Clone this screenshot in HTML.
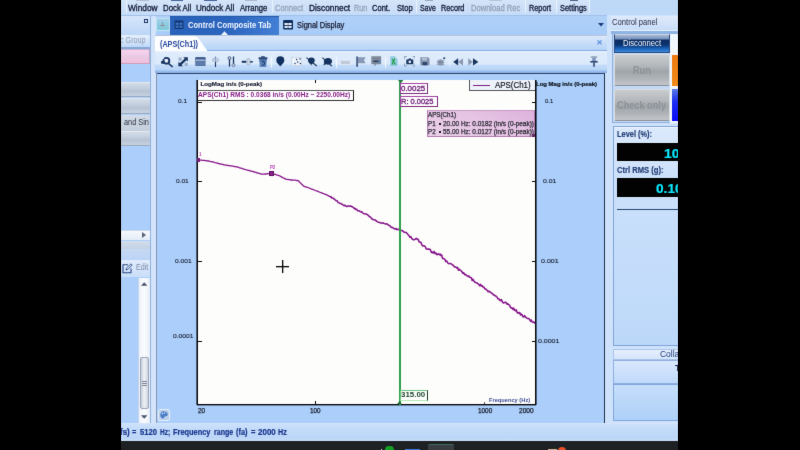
<!DOCTYPE html>
<html>
<head>
<meta charset="utf-8">
<style>
*{margin:0;padding:0;box-sizing:border-box;}
html,body{width:800px;height:450px;overflow:hidden;background:#000;}
body{position:relative;font-family:"Liberation Sans",sans-serif;font-size:9px;color:#1b2646;}
.a{position:absolute;display:block;}
.t{position:absolute;white-space:nowrap;transform-origin:0 0;}
#app{left:0;top:0;width:800px;height:450px;background:#b3d3f9;overflow:hidden;filter:url(#bl);}
</style>
</head>
<body>
<svg width="0" height="0" style="position:absolute"><filter id="bl" x="0" y="0" width="100%" height="100%" color-interpolation-filters="sRGB"><feConvolveMatrix order="3" kernelMatrix="0.0064 0.0672 0.0064 0.0672 0.7056 0.0672 0.0064 0.0672 0.0064" divisor="1" edgeMode="duplicate" preserveAlpha="true"/></filter></svg>
<div id="app" class="a">
<div class="a" style="left:0px;top:0px;width:800px;height:15px;background:linear-gradient(#d4e4f9,#c6dcf7);"></div>
<div class="a" style="left:590px;top:0px;width:100px;height:15px;background:#bed9f8;"></div>
<span class="t" style="left:128px;top:4.4px;font-size:9px;line-height:9px;color:#0e1430;transform:scaleX(0.922);-webkit-text-stroke:.3px #0e1430;">Window</span>
<span class="t" style="left:163.3px;top:4.4px;font-size:9px;line-height:9px;color:#0e1430;transform:scaleX(0.867);-webkit-text-stroke:.3px #0e1430;">Dock All</span>
<span class="t" style="left:196.2px;top:4.4px;font-size:9px;line-height:9px;color:#0e1430;transform:scaleX(0.898);-webkit-text-stroke:.3px #0e1430;">Undock All</span>
<span class="t" style="left:239.5px;top:4.4px;font-size:9px;line-height:9px;color:#0e1430;transform:scaleX(0.853);-webkit-text-stroke:.3px #0e1430;">Arrange</span>
<span class="t" style="left:274.5px;top:4.4px;font-size:9px;line-height:9px;color:#93a0b6;transform:scaleX(0.835);-webkit-text-stroke:.3px #93a0b6;">Connect</span>
<span class="t" style="left:308.7px;top:4.4px;font-size:9px;line-height:9px;color:#0e1430;transform:scaleX(0.925);-webkit-text-stroke:.3px #0e1430;">Disconnect</span>
<span class="t" style="left:354.2px;top:4.4px;font-size:9px;line-height:9px;color:#93a0b6;transform:scaleX(0.799);-webkit-text-stroke:.3px #93a0b6;">Run</span>
<span class="t" style="left:372.1px;top:4.4px;font-size:9px;line-height:9px;color:#0e1430;transform:scaleX(0.837);-webkit-text-stroke:.3px #0e1430;">Cont.</span>
<span class="t" style="left:396.6px;top:4.4px;font-size:9px;line-height:9px;color:#0e1430;transform:scaleX(0.843);-webkit-text-stroke:.3px #0e1430;">Stop</span>
<span class="t" style="left:420.4px;top:4.4px;font-size:9px;line-height:9px;color:#0e1430;transform:scaleX(0.770);-webkit-text-stroke:.3px #0e1430;">Save</span>
<span class="t" style="left:441.2px;top:4.4px;font-size:9px;line-height:9px;color:#0e1430;transform:scaleX(0.807);-webkit-text-stroke:.3px #0e1430;">Record</span>
<span class="t" style="left:470.9px;top:4.4px;font-size:9px;line-height:9px;color:#93a0b6;transform:scaleX(0.841);-webkit-text-stroke:.3px #93a0b6;">Download Rec</span>
<span class="t" style="left:529px;top:4.4px;font-size:9px;line-height:9px;color:#0e1430;transform:scaleX(0.814);-webkit-text-stroke:.3px #0e1430;">Report</span>
<span class="t" style="left:559.7px;top:4.4px;font-size:9px;line-height:9px;color:#0e1430;transform:scaleX(0.824);-webkit-text-stroke:.3px #0e1430;">Settings</span>
<div class="a" style="left:125.5px;top:0px;width:1px;height:13px;background:#e9f2fd;"></div>
<div class="a" style="left:272px;top:0px;width:1px;height:13px;background:#e9f2fd;"></div>
<div class="a" style="left:416px;top:0px;width:1px;height:13px;background:#e9f2fd;"></div>
<div class="a" style="left:525px;top:0px;width:1px;height:13px;background:#e9f2fd;"></div>
<div class="a" style="left:556px;top:0px;width:1px;height:13px;background:#e9f2fd;"></div>
<div class="a" style="left:589px;top:0px;width:1px;height:13px;background:#e9f2fd;"></div>
<div class="a" style="left:136px;top:0px;width:13px;height:1.3px;background:#a9b6cc;opacity:.85;"></div>
<div class="a" style="left:171px;top:0px;width:12px;height:1.3px;background:#2d4d8c;opacity:.85;"></div>
<div class="a" style="left:204px;top:0px;width:13px;height:1.3px;background:#2d4d8c;opacity:.85;"></div>
<div class="a" style="left:245px;top:0px;width:12px;height:1.3px;background:#a3b0c6;opacity:.85;"></div>
<div class="a" style="left:425px;top:0px;width:8px;height:1.3px;background:#8f9db6;opacity:.85;"></div>
<div class="a" style="left:489px;top:0px;width:13px;height:1.3px;background:#b4c0d2;opacity:.85;"></div>
<div class="a" style="left:570px;top:0px;width:8px;height:1.3px;background:#3a4f78;opacity:.85;"></div>
<div class="a" style="left:121px;top:15px;width:486px;height:20px;background:linear-gradient(#b0d1f9,#a8ccf8);"></div>
<div class="a" style="left:121px;top:15px;width:557px;height:1px;background:#9fc0ea;"></div>
<div class="a" style="left:121px;top:16px;width:30px;height:19px;background:linear-gradient(#d6e5fa,#bcd6f7);"></div>
<div class="a" style="left:143.6px;top:18.9px;width:4.2px;height:4.2px;background:#17335f;"></div>
<div class="a" style="left:144.6px;top:19.9px;width:2.2px;height:2.2px;background:#dbe8fb;"></div>
<div class="a" style="left:150px;top:16px;width:1px;height:19px;background:#8fb2e0;"></div>
<div class="a" style="left:150.6px;top:16px;width:5.8px;height:420px;background:#d3e4fb;"></div>
<div class="a" style="left:155.6px;top:17.6px;width:14px;height:13.6px;background:linear-gradient(#a2cfec,#8ccbe2 50%,#80c8da);border:1px solid #c4e3f3;"></div>
<div class="a" style="left:160.2px;top:24.6px;width:5px;height:1.4px;background:#8f9098;"></div>
<div class="a" style="left:162px;top:22px;width:1.4px;height:3.4px;background:#8f9098;"></div>
<div class="a" style="left:162.2px;top:26px;width:1px;height:1.4px;background:#a0a4ac;"></div>
<div class="a" style="left:170px;top:16px;width:109px;height:19px;background:linear-gradient(100deg,#2a62ba 0%,#2b65be 55%,#4480d6 100%);"></div>
<div class="a" style="left:170px;top:16px;width:109px;height:1px;background:#2458a8;"></div>
<svg class="a" style="left:221.2px;top:31px" width="7" height="4"><path d="M0 4 L3.5 0.3 L7 4Z" fill="#eef4fd"/></svg>
<svg class="a" style="left:174px;top:20px" width="10" height="10"><rect x="0.5" y="0.5" width="9" height="8.5" rx="1" fill="#12366f"/><rect x="1.6" y="2.6" width="3" height="2.2" fill="#3d74c8"/><rect x="5.4" y="2.6" width="3" height="2.2" fill="#3d74c8"/><rect x="1.6" y="5.6" width="3" height="2.2" fill="#3d74c8"/><rect x="5.4" y="5.6" width="3" height="2.2" fill="#3d74c8"/></svg>
<span class="t" style="left:187.6px;top:21px;font-size:9px;line-height:9px;color:#f2f6fd;font-weight:bold;transform:scaleX(0.842);">Control Composite Tab</span>
<svg class="a" style="left:283px;top:20px" width="10.4" height="9.8"><rect x="0.1" y="0.1" width="10" height="9.4" rx="1.2" fill="#0e2c5e"/><rect x="1.5" y="3" width="3.3" height="2" fill="#f0f5fd"/><rect x="5.3" y="3" width="3.3" height="2" fill="#f0f5fd"/><rect x="1.5" y="5.9" width="3.3" height="2" fill="#f0f5fd"/><rect x="5.3" y="5.9" width="3.3" height="2" fill="#f0f5fd"/></svg>
<span class="t" style="left:296.6px;top:21px;font-size:9px;line-height:9px;color:#14162a;transform:scaleX(0.829);-webkit-text-stroke:.25px #14162a;">Signal Display</span>
<svg class="a" style="left:597.5px;top:23px" width="6" height="4"><path d="M0 0 L6 0 L3 3.6Z" fill="#1b3a78"/></svg>
<div class="a" style="left:606.6px;top:15px;width:4.4px;height:58px;background:#cfe2fb;"></div>
<div class="a" style="left:605px;top:73px;width:8px;height:368px;background:#cfe2fb;"></div>
<div class="a" style="left:155px;top:35px;width:452px;height:16px;background:linear-gradient(#e8effb 0%,#d8e6fa 14%,#b3d2f8 100%);"></div>
<div class="a" style="left:155px;top:34.6px;width:452px;height:0.8px;background:#b4c3da;"></div>
<div class="a" style="left:155px;top:50.2px;width:452px;height:1px;background:#86ade2;"></div>
<svg class="a" style="left:155px;top:36px" width="56" height="15"><path d="M0 15 L0 2 Q0 0 2 0 L39 0 Q42 0 44 3 L52.5 15Z" fill="#fdfeff"/></svg>
<span class="t" style="left:159.6px;top:39.5px;font-size:8.5px;line-height:8.5px;color:#24459a;font-weight:bold;transform:scaleX(0.847);">(APS(Ch1))</span>
<svg class="a" style="left:597.2px;top:40px" width="5" height="4.6"><path d="M0.4 0.4 L4.6 4.2 M4.6 0.4 L0.4 4.2" stroke="#5a90e0" stroke-width="1.2"/></svg>
<div class="a" style="left:155px;top:51.2px;width:452px;height:21.8px;background:linear-gradient(#e9f2fd 0%,#deebfc 10%,#dbeafb 58%,#c1daf8 66%,#b9d5f7 84%,#96bbee 93%,#88b0e8 100%);"></div>
<svg class="a" style="left:161px;top:56px" width="13" height="12" viewBox="0 0 13 12"><circle cx="5.4" cy="4.8" r="2.9" fill="#e6effb" stroke="#17335f" stroke-width="1.9"/><rect x="0.1" y="5" width="3.2" height="2.7" fill="#17335f"/><path d="M2.2 2.2 L3.6 3.6" stroke="#dfe9f9" stroke-width=".9"/><path d="M7.7 7.6 L11.3 10.6" stroke="#17335f" stroke-width="1.4" stroke-linecap="round"/></svg>
<svg class="a" style="left:177.5px;top:57px" width="10.5" height="9.5" viewBox="0 0 10.5 9.5"><rect x="0.5" y="0.5" width="3.2" height="3.2" fill="#8fa3c4" opacity=".8"/><rect x="6.6" y="5.8" width="3.2" height="3.2" fill="#8fa3c4" opacity=".8"/><path d="M2 7.6 L8.2 1.8" stroke="#17335f" stroke-width="2.3"/><path d="M5.2 0.2 L9.8 0.2 L9.8 4.6Z" fill="#17335f"/><path d="M0.4 4.8 L0.4 9.2 L5 9.2Z" fill="#17335f"/></svg>
<svg class="a" style="left:195px;top:56.6px" width="11" height="9.6" viewBox="0 0 11 9.6"><rect x="0.3" y="0.3" width="10.2" height="8.9" rx="1.2" fill="#4d6b9a"/><rect x="0.3" y="0.3" width="10.2" height="2.3" rx="1" fill="#3b5988"/><rect x="1" y="2.5" width="8.8" height="1.3" fill="#b5c8e4"/><rect x="1.2" y="4.4" width="8.4" height="4" fill="#5f7eae"/></svg>
<svg class="a" style="left:212px;top:56px" width="7" height="12" viewBox="0 0 7 12"><path d="M3.5 0.5 L3.5 2.6" stroke="#5a7098" stroke-width=".9"/><path d="M3.5 5.6 L3.5 11" stroke="#17335f" stroke-width="1.1"/><rect x="0.6" y="2.4" width="5.8" height="3.2" rx="0.8" fill="#c3d1e4" stroke="#93a6c2" stroke-width=".6"/><path d="M3.5 2.6 L3.5 5.4" stroke="#7d90b0" stroke-width=".8"/></svg>
<svg class="a" style="left:227px;top:56px" width="9" height="12" viewBox="0 0 9 12"><path d="M2.5 3 L2.5 10.6" stroke="#17335f" stroke-width="1.3"/><path d="M6.5 0.5 L6.5 8" stroke="#17335f" stroke-width="1.3"/><circle cx="2.5" cy="2.1" r="1.4" fill="#dfe9f8" stroke="#17335f" stroke-width=".8"/><circle cx="6.5" cy="9.2" r="1.5" fill="#c3cfdf" stroke="#5a6f94" stroke-width=".8"/></svg>
<svg class="a" style="left:241px;top:58px" width="12" height="8" viewBox="0 0 12 8"><path d="M0.8 3.8 L5.4 3.8" stroke="#17335f" stroke-width="2"/><path d="M9 3.8 L11.8 3.8" stroke="#17335f" stroke-width="1.5"/><rect x="6" y="0.6" width="2.9" height="6.2" rx="0.9" fill="#cdd8e8" stroke="#93a4be" stroke-width=".6"/></svg>
<svg class="a" style="left:257.5px;top:56px" width="10" height="11.4" viewBox="0 0 10 11.4"><rect x="0.6" y="1.3" width="8.8" height="1.7" fill="#23406e"/><rect x="3.2" y="0.2" width="3.6" height="1.4" fill="#23406e"/><path d="M1.2 3.2 L8.8 3.2 L8.2 10.9 L1.8 10.9Z" fill="#5c82ba"/><path d="M1.2 3.2 L8.8 3.2 L8.7 4.4 L1.3 4.4Z" fill="#3d5f94"/><path d="M3.8 6 A1.7 1.7 0 1 1 4.2 8.8" stroke="#1d3c6c" stroke-width="1.1" fill="none"/></svg>
<div class="a" style="left:271.4px;top:57px;width:1px;height:11px;background:#f4f8fe"></div>
<svg class="a" style="left:275.8px;top:56px" width="9" height="11" viewBox="0 0 9 11"><path d="M4.3 10.6 C3.9 9.2 0.3 7.6 0.3 4.3 A4 4 0 0 1 8.3 4.3 C8.3 7.6 4.7 9.2 4.3 10.6Z" fill="#0f2f5f"/></svg>
<svg class="a" style="left:290.5px;top:57px" width="11" height="9.5" viewBox="0 0 11 9.5"><path d="M1.2 0.3 L1.2 8.2 L10.6 8.2" stroke="#cfd9e8" stroke-width="1.1" fill="none"/><rect x="0.6" y="0.4" width="10" height="8.2" fill="#f1f6fd" fill-opacity=".9" stroke="#c3cfe0" stroke-width=".7"/><circle cx="5.6" cy="2.6" r=".75" fill="#17335f"/><circle cx="9" cy="2.1" r=".75" fill="#17335f"/><circle cx="6.6" cy="5" r=".75" fill="#17335f"/><circle cx="4" cy="6.4" r=".75" fill="#17335f"/><circle cx="9.4" cy="6.4" r=".75" fill="#17335f"/></svg>
<svg class="a" style="left:306px;top:57px" width="11.5" height="10" viewBox="0 0 11.5 10"><path d="M5.2 8.4 C4.8 7 2 6 2 3.6 A3.3 3 0 0 1 8.8 3.6 C8.8 6 5.8 6.8 5.2 8.4Z" fill="#17335f"/><path d="M0.4 0.6 L10.8 9" stroke="#17335f" stroke-width="1.1"/></svg>
<svg class="a" style="left:322.3px;top:57px" width="10.5" height="10" viewBox="0 0 10.5 10"><path d="M1.4 8.6 L2.2 5.6 A4.1 3.3 0 1 1 4 7.2Z" fill="#17335f"/><path d="M0.3 0.6 L9.8 9" stroke="#17335f" stroke-width="1.1"/></svg>
<div class="a" style="left:336px;top:57px;width:1px;height:11px;background:#f4f8fe"></div>
<svg class="a" style="left:340px;top:59.7px" width="11" height="5" viewBox="0 0 11 5"><rect x="0.3" y="0.3" width="10" height="4.2" fill="#bfc9d8" stroke="#e4eaf3" stroke-width=".8"/></svg>
<svg class="a" style="left:355.5px;top:56px" width="10.5" height="11.5" viewBox="0 0 10.5 11.5"><rect x="0.4" y="0.5" width="1.4" height="10.2" fill="#17335f"/><path d="M1.8 1.3 L9.6 1.3 L8 4.2 L9.6 7.2 L1.8 7.2Z" fill="#8799b6"/></svg>
<svg class="a" style="left:371px;top:56.3px" width="11" height="10.8" viewBox="0 0 11 10.8"><path d="M0.3 0.3 L10.1 0.3 L10.1 8.2 L5.4 8.2 L3.6 10.4 L3.6 8.2 L0.3 8.2Z" fill="#7d8797"/><path d="M2.4 5.3 L7.6 5.3" stroke="#1c3560" stroke-width="1.3"/><path d="M6 7 L9.6 7 L9.6 3.6Z" fill="#5b86c8" opacity=".7"/></svg>
<div class="a" style="left:385.4px;top:57px;width:1px;height:11px;background:#f4f8fe"></div>
<svg class="a" style="left:389.8px;top:56.3px" width="8" height="10.4" viewBox="0 0 8 10.4"><path d="M0.3 0.3 L5.2 0.3 L7.6 2.7 L7.6 10.1 L0.3 10.1Z" fill="#92c9e0"/><path d="M5.2 0.3 L5.2 2.7 L7.6 2.7Z" fill="#d3ecf5"/><path d="M2 3 L5.4 8.6 M5 2.2 L2 8.4" stroke="#1fa040" stroke-width="1.2"/></svg>
<svg class="a" style="left:403.6px;top:56.3px" width="11.6" height="10.4" viewBox="0 0 11.6 10.4"><path d="M0.5 2.8 L0.5 0.5 L2.8 0.5 M8.8 0.5 L11.1 0.5 L11.1 2.8 M11.1 7.6 L11.1 9.9 L8.8 9.9 M2.8 9.9 L0.5 9.9 L0.5 7.6" stroke="#8799b6" stroke-width="1" fill="none"/><path d="M2.3 3.4 L4.2 3.4 L4.8 2.4 L6.8 2.4 L7.4 3.4 L9.3 3.4 L9.3 8.3 L2.3 8.3Z" fill="#17335f"/><circle cx="5.8" cy="5.8" r="1.35" fill="#e8effb"/></svg>
<svg class="a" style="left:419.8px;top:57.2px" width="9.8" height="8.6" viewBox="0 0 9.8 8.6"><path d="M0.3 0.3 L8 0.3 L9.5 1.8 L9.5 8.3 L0.3 8.3Z" fill="#7f8fac"/><rect x="1.9" y="0.7" width="5.2" height="2.7" fill="#b4bfd2"/><rect x="2.6" y="5.2" width="4.6" height="3.1" fill="#2c426c"/></svg>
<svg class="a" style="left:435.8px;top:57px" width="10" height="9" viewBox="0 0 10 9"><path d="M0.3 4 L4.6 2.2 L8.9 4 L4.6 5.8Z" fill="#8a96ac"/><path d="M0.3 5.8 L4.6 4 L8.9 5.8 L4.6 7.6Z" fill="#7a88a2"/><path d="M0.3 7.4 L4.6 5.6 L8.9 7.4 L4.6 8.8Z" fill="#8a96ac"/><circle cx="8.2" cy="1.3" r="1" fill="#17335f"/></svg>
<div class="a" style="left:449.2px;top:58px;width:1px;height:9px;background:#f4f8fe;opacity:.45"></div>
<svg class="a" style="left:453px;top:58px" width="10.5" height="8" viewBox="0 0 10.5 8"><path d="M5.2 0.2 L5.2 7.6 L0.2 3.9Z" fill="#17335f"/><path d="M10 0.2 L10 7.6 L5.2 3.9Z" fill="#8a98b2"/></svg>
<svg class="a" style="left:468px;top:58px" width="11" height="8" viewBox="0 0 11 8"><path d="M0.2 0.2 L0.2 7.6 L5 3.9Z" fill="#8a98b2"/><path d="M5 0.2 L5 7.6 L10.4 3.9Z" fill="#17335f"/></svg>
<svg class="a" style="left:590.2px;top:56.3px" width="8" height="11" viewBox="0 0 8 11"><path d="M0.8 1 L7.2 1" stroke="#8292ac" stroke-width="1.3"/><rect x="2.2" y="1.6" width="3.6" height="3.7" fill="#7f94b8"/><path d="M0.3 5.8 L7.7 5.8" stroke="#233f70" stroke-width="1.5"/><path d="M4 6.4 L4 10.8" stroke="#17335f" stroke-width="1.4"/></svg>
<div class="a" style="left:156.4px;top:73px;width:448.6px;height:351px;background:#abcffa;"></div>
<div class="a" style="left:156.4px;top:73px;width:448.6px;height:1px;background:#2f4060;"></div>
<div class="a" style="left:156.4px;top:73px;width:1px;height:351px;background:#8496b2;"></div>
<div class="a" style="left:604px;top:73px;width:1px;height:351px;background:#1f3050;"></div>
<div class="a" style="left:198px;top:80px;width:337px;height:324px;background:#fdfdfb;"></div>
<div class="a" style="left:197px;top:80px;width:1px;height:325px;background:#0a0a0a;"></div>
<div class="a" style="left:196px;top:80px;width:1px;height:325px;background:rgba(10,20,40,.6);"></div>
<div class="a" style="left:197px;top:404px;width:339.4px;height:1px;background:#0a0a0a;"></div>
<div class="a" style="left:197px;top:405px;width:339.4px;height:1px;background:rgba(10,20,40,.4);"></div>
<div class="a" style="left:535px;top:80px;width:1px;height:325px;background:#0a0a0a;"></div>
<div class="a" style="left:536px;top:80px;width:1px;height:325px;background:rgba(10,20,40,.6);"></div>
<div class="a" style="left:198px;top:102.0px;width:3.6px;height:1px;background:#0a0a0a;"></div>
<div class="a" style="left:531.5px;top:102.0px;width:3.6px;height:1px;background:#0a0a0a;"></div>
<div class="a" style="left:198px;top:181.0px;width:3.6px;height:1px;background:#0a0a0a;"></div>
<div class="a" style="left:531.5px;top:181.0px;width:3.6px;height:1px;background:#0a0a0a;"></div>
<div class="a" style="left:198px;top:261.0px;width:3.6px;height:1px;background:#0a0a0a;"></div>
<div class="a" style="left:531.5px;top:261.0px;width:3.6px;height:1px;background:#0a0a0a;"></div>
<div class="a" style="left:198px;top:341.0px;width:3.6px;height:1px;background:#0a0a0a;"></div>
<div class="a" style="left:531.5px;top:341.0px;width:3.6px;height:1px;background:#0a0a0a;"></div>
<div class="a" style="left:314.7px;top:400.8px;width:1.2px;height:3.4px;background:#0a0a0a;"></div>
<div class="a" style="left:484.2px;top:402px;width:1px;height:2px;background:#555;"></div>
<div class="a" style="left:315px;top:80px;width:1.2px;height:3.3px;background:#0a0a0a;"></div>
<span class="t" style="left:178.3px;top:98.9px;font-size:5.8px;line-height:5.8px;color:#1c2238;transform:scaleX(1.116);-webkit-text-stroke:.15px #1c2238;">0.1</span>
<span class="t" style="left:176.15px;top:179.0px;font-size:5.8px;line-height:5.8px;color:#1c2238;transform:scaleX(1.125);-webkit-text-stroke:.15px #1c2238;">0.01</span>
<span class="t" style="left:174.6px;top:258.8px;font-size:5.8px;line-height:5.8px;color:#1c2238;transform:scaleX(1.144);-webkit-text-stroke:.15px #1c2238;">0.001</span>
<span class="t" style="left:172.8px;top:334.3px;font-size:5.8px;line-height:5.8px;color:#1c2238;transform:scaleX(1.150);-webkit-text-stroke:.15px #1c2238;">0.0001</span>
<span class="t" style="left:544.9px;top:99.0px;font-size:5.8px;line-height:5.8px;color:#1c2238;transform:scaleX(1.017);-webkit-text-stroke:.15px #1c2238;">0.1</span>
<span class="t" style="left:542.75px;top:179.0px;font-size:5.8px;line-height:5.8px;color:#1c2238;transform:scaleX(1.178);-webkit-text-stroke:.15px #1c2238;">0.01</span>
<span class="t" style="left:540.55px;top:259.3px;font-size:5.8px;line-height:5.8px;color:#1c2238;transform:scaleX(1.219);-webkit-text-stroke:.15px #1c2238;">0.001</span>
<span class="t" style="left:538.3px;top:339.3px;font-size:5.8px;line-height:5.8px;color:#1c2238;transform:scaleX(1.206);-webkit-text-stroke:.15px #1c2238;">0.0001</span>
<span class="t" style="left:197.9px;top:407.8px;font-size:6.9px;line-height:6.9px;color:#141826;transform:scaleX(0.938);-webkit-text-stroke:.25px #141826;">20</span>
<span class="t" style="left:310.4px;top:407.8px;font-size:6.9px;line-height:6.9px;color:#141826;transform:scaleX(0.921);-webkit-text-stroke:.25px #141826;">100</span>
<span class="t" style="left:477.7px;top:407.8px;font-size:6.9px;line-height:6.9px;color:#141826;transform:scaleX(0.925);-webkit-text-stroke:.25px #141826;">1000</span>
<span class="t" style="left:519.4px;top:407.8px;font-size:6.9px;line-height:6.9px;color:#141826;transform:scaleX(0.951);-webkit-text-stroke:.25px #141826;">2000</span>
<span class="t" style="left:200.5px;top:81px;font-size:6.2px;line-height:6.2px;color:#141a30;font-weight:bold;-webkit-text-stroke:.15px #141a30;">LogMag in/s (0-peak)</span>
<span class="t" style="left:536.3px;top:81px;font-size:6.2px;line-height:6.2px;color:#0c101a;font-weight:bold;transform:scaleX(0.966);-webkit-text-stroke:.2px #0c101a;">Log Mag in/s (0-peak)</span>
<span class="t" style="left:489px;top:396.6px;font-size:6.2px;line-height:6.2px;color:#3a4a98;font-weight:bold;transform:scaleX(0.920);">Frequency (Hz)</span>
<div class="a" style="left:198.2px;top:89.8px;width:155.8px;height:11px;background:#fefefe;border:1px solid #555;border-right-color:#1a1a1a;border-bottom-color:#333;border-left:none;"></div>
<span class="t" style="left:198px;top:92px;font-size:6.4px;line-height:6.4px;color:#861c86;font-weight:bold;transform:scaleX(1.029);">APS(Ch1) RMS : 0.0368 in/s (0.00Hz ~ 2250.00Hz)</span>
<svg class="a" style="left:190px;top:150px" width="350" height="180"><path d="M7.9 9.8 L8.8 9.8 L9.7 9.9 L10.6 10.1 L11.4 10.1 L12.3 10.3 L13.2 10.4 L14.1 10.4 L15.0 10.6 L15.8 10.7 L16.7 10.7 L17.5 11.0 L18.3 11.0 L19.2 11.1 L20.0 11.4 L20.8 11.6 L21.7 11.6 L22.5 11.8 L23.4 12.0 L24.3 12.4 L25.2 12.7 L26.2 12.9 L27.1 13.1 L28.0 13.4 L28.8 13.7 L29.6 13.6 L30.5 14.1 L31.3 14.1 L32.1 14.3 L32.9 14.4 L33.8 14.8 L34.6 14.8 L35.5 15.1 L36.4 15.1 L37.3 15.4 L38.2 15.5 L39.1 15.6 L40.0 15.8 L40.8 15.9 L41.6 15.9 L42.4 16.1 L43.2 16.2 L44.0 16.5 L44.8 16.6 L45.6 16.7 L46.4 16.9 L47.2 17.0 L48.1 17.2 L48.9 17.5 L49.7 17.9 L50.5 18.1 L51.4 18.2 L52.2 18.6 L53.0 18.8 L53.9 19.1 L54.8 19.4 L55.8 19.7 L56.7 19.8 L57.6 20.3 L58.5 20.4 L59.3 20.5 L60.1 20.8 L60.9 21.2 L61.8 21.2 L62.6 21.5 L63.4 21.6 L64.2 22.0 L65.0 22.2 L65.9 22.5 L66.8 22.7 L67.6 23.1 L68.5 23.1 L69.4 23.5 L70.2 23.7 L71.1 24.0 L72.0 24.2 L72.8 24.1 L73.6 24.2 L74.4 24.2 L75.2 24.0 L76.0 24.0 L76.8 23.9 L77.7 23.6 L78.5 23.7 L79.3 23.6 L80.2 23.6 L81.0 23.3 L81.8 23.6 L82.6 23.7 L83.4 23.9 L84.2 24.2 L85.0 24.4 L85.8 24.5 L86.7 24.9 L87.5 25.1 L88.3 25.4 L89.2 25.6 L90.0 26.0 L91.0 26.7 L92.0 27.1 L93.0 27.8 L93.9 28.1 L94.9 28.6 L95.8 29.1 L96.8 29.4 L97.6 29.4 L98.5 29.6 L99.4 29.7 L100.2 29.9 L101.1 30.0 L102.0 30.0 L102.9 30.2 L103.7 30.1 L104.6 30.2 L105.4 30.2 L106.3 30.5 L107.1 30.6 L108.0 30.5 L108.8 31.2 L109.7 32.1 L110.5 33.0 L111.5 34.0 L112.6 35.0 L113.6 36.1 L114.5 36.4 L115.4 36.8 L116.3 37.0 L117.3 37.3 L118.2 37.7 L119.1 38.0 L120.0 38.4 L120.9 38.7 L121.7 39.2 L122.6 39.4 L123.4 39.7 L124.3 40.0 L125.1 40.3 L126.0 40.6 L126.8 40.8 L127.7 41.4 L128.5 41.7 L129.3 42.0 L130.2 42.4 L131.0 42.6 L131.9 42.9 L132.8 43.3 L133.7 43.6 L134.6 44.1 L135.5 44.3 L136.4 44.6 L137.2 45.1 L138.2 45.6 L139.1 46.2 L140.1 46.6 L141.1 46.9 L142.0 48.0" fill="none" stroke="#86148a" stroke-width="1.3" stroke-linejoin="round"/><path d="M140.1 46.6 L141.1 46.9 L142.0 48.0 L142.9 48.0 L143.7 48.7 L144.6 49.2 L145.4 50.0 L146.2 50.8 L147.2 50.8 L148.1 52.5 L149.1 52.9 L150.0 53.4 L150.8 53.4 L151.6 54.0 L152.5 54.6 L153.3 55.1 L154.1 55.7 L155.1 55.3 L156.1 56.3 L157.0 56.5 L158.0 56.0 L158.8 56.1 L159.6 56.3 L160.4 56.0 L161.2 56.2 L162.0 56.8 L162.8 57.1 L163.6 57.6 L164.4 58.8 L165.2 58.5 L166.0 59.4 L166.8 59.3 L167.7 60.8 L168.5 60.7 L169.3 60.7 L170.2 61.6 L171.0 62.0 L171.8 61.7 L172.6 62.7 L173.4 63.5 L174.2 63.7 L175.0 63.8 L175.8 63.9 L176.6 64.2 L177.5 64.9 L178.3 65.2 L179.2 66.5 L180.0 66.8 L181.0 67.8 L182.0 69.0 L183.0 69.6 L184.0 69.7 L185.0 69.9 L186.0 70.6 L186.8 71.4 L187.7 71.9 L188.5 72.2 L189.4 72.5 L190.2 72.5 L191.1 73.1 L192.1 73.2 L193.1 72.8 L194.0 73.4 L194.8 73.8 L195.6 73.9 L196.4 73.8 L197.3 74.2 L198.1 74.8 L198.9 75.4 L199.7 75.6 L200.5 76.6 L201.4 77.4 L202.2 77.3 L203.0 77.8 L204.0 78.6 L205.0 78.9 L206.0 78.6 L207.0 79.6 L207.9 79.3 L208.9 79.5 L209.9 80.3 L210.8 80.3 L211.7 80.5 L212.6 80.8 L213.5 81.6 L214.4 82.3 L215.3 82.5 L216.2 82.4 L217.1 83.4 L218.1 84.7 L219.0 85.6 L220.0 87.5 L221.0 86.7 L222.0 89.0 L222.9 89.3 L223.7 89.9 L224.6 89.4 L225.4 89.2 L226.3 88.4 L227.2 89.2 L228.1 89.3 L229.1 91.9 L230.0 92.0 L230.9 92.4 L231.8 94.6 L232.7 96.0 L233.6 95.6 L234.5 96.0 L235.4 96.8 L236.2 99.0 L237.1 99.1 L238.0 99.2 L238.8 98.9 L239.7 99.3 L240.5 99.9 L241.4 102.5 L242.2 102.0 L243.1 103.1 L244.1 101.5 L245.1 103.6 L246.0 103.0 L246.8 104.7 L247.6 104.3 L248.4 103.8 L249.3 104.8 L250.1 104.1 L250.9 105.5 L251.7 105.0 L252.5 108.4 L253.4 108.4 L254.2 108.9 L255.0 109.6 L255.9 111.6 L256.8 111.0 L257.8 113.0 L258.7 113.7 L259.6 113.6 L260.5 113.4 L261.4 114.1 L262.3 114.7 L263.2 115.2 L264.1 116.7 L265.0 117.0 L265.9 116.9 L266.7 117.9 L267.6 117.6 L268.5 120.3 L269.4 119.3 L270.2 120.1 L271.1 120.8 L272.0 121.7 L272.8 123.3 L273.7 122.7 L274.6 124.7 L275.4 124.3 L276.3 125.1 L277.1 125.8 L278.0 126.4 L278.8 125.8 L279.7 127.5 L280.5 127.5 L281.4 127.7 L282.2 130.5 L283.1 129.4 L283.9 130.9 L284.8 132.3 L285.6 132.3 L286.4 133.0 L287.2 132.9 L288.1 133.9 L288.9 134.5 L289.7 135.7 L290.5 134.4 L291.4 136.1 L292.2 135.8 L293.0 137.0 L293.9 137.0 L294.8 139.0 L295.6 138.9 L296.5 139.6 L297.4 140.8 L298.2 141.8 L299.1 141.1 L300.0 141.9 L300.9 142.8 L301.8 143.2 L302.6 143.8 L303.5 145.0 L304.4 145.0 L305.2 145.8 L306.1 146.3 L307.0 147.0 L307.8 148.8 L308.7 148.8 L309.5 149.9 L310.3 150.7 L311.2 149.5 L312.0 150.9 L312.8 152.6 L313.7 152.9 L314.5 152.6 L315.3 152.2 L316.2 152.7 L317.0 154.2 L317.8 153.8 L318.7 154.8 L319.5 154.9 L320.3 157.1 L321.2 158.0 L322.0 157.8 L322.9 159.5 L323.7 158.1 L324.6 160.2 L325.5 160.7 L326.3 159.9 L327.2 162.5 L328.0 163.3 L328.9 162.7 L329.7 162.5 L330.5 165.0 L331.3 164.1 L332.1 164.9 L333.0 166.8 L333.8 166.9 L334.6 165.6 L335.4 166.9 L336.2 167.7 L337.0 168.2 L337.9 168.4 L338.7 168.6 L339.6 169.5 L340.5 171.2 L341.3 170.0 L342.2 172.0 L343.1 172.3 L343.9 171.8 L344.8 173.7" fill="none" stroke="#86148a" stroke-width="1.55" stroke-linejoin="round"/></svg>
<div class="a" style="left:197px;top:157.5px;width:3px;height:4.5px;background:#7a1a7a;"></div>
<div class="a" style="left:268.7px;top:171px;width:5.3px;height:4.8px;background:#8f1f90;border:1px solid #5c125c;"></div>
<span class="t" style="left:198.6px;top:152px;font-size:5.5px;line-height:5.5px;color:#b848b8;font-weight:bold;transform:scaleX(0.850);">1</span>
<span class="t" style="left:270px;top:164.6px;font-size:5.5px;line-height:5.5px;color:#b43ab4;font-weight:bold;transform:scaleX(0.773);">P2</span>
<div class="a" style="left:398.8px;top:80px;width:2px;height:325px;background:#2fa04c;"></div>
<svg class="a" style="left:397.6px;top:80px" width="5.4" height="3.4"><path d="M0 0 L5.4 0 L2.7 3.4Z" fill="#1f7d3a"/></svg>
<svg class="a" style="left:397.3px;top:401px" width="5" height="3.4"><path d="M0 3.4 L5 3.4 L2.5 0Z" fill="#1a6a32"/></svg>
<div class="a" style="left:400.2px;top:82.7px;width:27.7px;height:11.3px;background:#fff;border:1px solid #a544a5;border-right-color:#7a2a7c;border-bottom-color:#7a2a7c;"></div>
<span class="t" style="left:401.2px;top:84.8px;font-size:8px;line-height:8px;color:#6e1d78;transform:scaleX(0.989);-webkit-text-stroke:.35px #6e1d78;">0.0025</span>
<div class="a" style="left:400.2px;top:95.6px;width:37.6px;height:11.5px;background:#fff;border:1px solid #a544a5;border-right-color:#7a2a7c;border-bottom-color:#7a2a7c;"></div>
<span class="t" style="left:401.4px;top:97.8px;font-size:8px;line-height:8px;color:#6e1d78;transform:scaleX(0.934);-webkit-text-stroke:.35px #6e1d78;">R: 0.0025</span>
<div class="a" style="left:400px;top:390.3px;width:27.6px;height:10.8px;background:#fdfffd;border:1px solid #6cc47c;border-right-color:#1d3a26;border-bottom-color:#b2ebb4;"></div>
<span class="t" style="left:401px;top:391.4px;font-size:7.8px;line-height:7.8px;color:#153f25;font-weight:bold;transform:scaleX(1.014);">315.00</span>
<div class="a" style="left:469px;top:80px;width:66px;height:10.6px;background:#eef3fb;border-left:1px solid #555;border-bottom:1px solid #555;"></div>
<div class="a" style="left:472.5px;top:84.6px;width:17px;height:1.4px;background:#7d1a80;"></div>
<span class="t" style="left:495.4px;top:81.2px;font-size:8.6px;line-height:8.6px;color:#16171e;transform:scaleX(0.920);-webkit-text-stroke:.2px #16171e;">APS(Ch1)</span>
<div class="a" style="left:427.2px;top:110.3px;width:108px;height:27px;background:linear-gradient(200deg,#dcb2dc 0%,#e6c4e4 45%,#ebd0e9 100%);border:1px solid #b57ab5;border-top-color:#c79bc6;"></div>
<span class="t" style="left:428.3px;top:112px;font-size:6.6px;line-height:6.6px;color:#24242e;transform:scaleX(0.942);-webkit-text-stroke:.25px #2c2c38;">APS(Ch1)</span>
<span class="t" style="left:428.3px;top:120.9px;font-size:6.6px;line-height:6.6px;color:#24242e;transform:scaleX(0.941);-webkit-text-stroke:.25px #2c2c38;">P1</span>
<span class="t" style="left:443.4px;top:120.9px;font-size:6.6px;line-height:6.6px;color:#24242e;transform:scaleX(0.977);-webkit-text-stroke:.25px #2c2c38;">20.00 Hz: 0.0182 (in/s (0-peak))</span>
<span class="t" style="left:428.3px;top:129.2px;font-size:6.6px;line-height:6.6px;color:#24242e;transform:scaleX(0.941);-webkit-text-stroke:.25px #2c2c38;">P2</span>
<span class="t" style="left:443.4px;top:129.2px;font-size:6.6px;line-height:6.6px;color:#24242e;transform:scaleX(0.977);-webkit-text-stroke:.25px #2c2c38;">55.00 Hz: 0.0127 (in/s (0-peak))</span>
<div class="a" style="left:438.8px;top:122.9px;width:2.3px;height:2.4px;background:#1a1a24;"></div>
<div class="a" style="left:438.8px;top:131.1px;width:2.3px;height:2.4px;background:#1a1a24;"></div>
<div class="a" style="left:532px;top:133.8px;width:3.2px;height:3.4px;background:#6a2a6a;"></div>
<div class="a" style="left:276px;top:266px;width:13px;height:1px;background:#050505;"></div>
<div class="a" style="left:276px;top:267px;width:13px;height:1px;background:rgba(0,0,0,.3);"></div>
<div class="a" style="left:282px;top:260px;width:1px;height:13px;background:#050505;"></div>
<div class="a" style="left:283px;top:260px;width:1px;height:13px;background:rgba(0,0,0,.3);"></div>
<svg class="a" style="left:158.4px;top:409px" width="12" height="12"><rect x="0.5" y="0.5" width="11" height="11" rx="1.5" fill="#bcd0ec" stroke="#e4edfa" stroke-width="1"/><path d="M6 2.2 C3.4 2.2 2.2 4.2 2.2 6 C2.2 8 3.6 9.8 5.4 9.6 C6.6 9.5 5.8 8 6.8 7.6 C8 7.2 9.8 7.4 9.8 5.6 C9.8 3.6 8 2.2 6 2.2Z" fill="#4a7fc6"/><circle cx="4.4" cy="4.6" r=".8" fill="#d6e6fa"/><circle cx="6.6" cy="4" r=".8" fill="#d6e6fa"/></svg>
<div class="a" style="left:121px;top:35px;width:30px;height:388px;background:#abcffa;"></div>
<div class="a" style="left:150px;top:35px;width:1px;height:388px;background:#8fb2e0;"></div>
<div class="a" style="left:121px;top:35px;width:29px;height:12.5px;background:linear-gradient(#e6effc,#bdd6f7);"></div>
<span class="t" style="left:119.5px;top:35.5px;font-size:8.6px;line-height:8.6px;color:#8e9bb2;transform:scaleX(0.834);">c Group</span>
<div class="a" style="left:121px;top:47.2px;width:29px;height:1.8px;background:#86a8d6;"></div>
<div class="a" style="left:121px;top:49px;width:29px;height:15px;background:linear-gradient(#f7d3ee 0%,#f0cde8 30%,#e8c9e2 55%,#f0c2e2 85%,#eebfe0 100%);border-top:1px solid #c8b4d0;border-bottom:1px solid #cf9fb4;border-right:1px solid #bfa8c0;"></div>
<div class="a" style="left:121px;top:82px;width:29px;height:15px;background:linear-gradient(#d3dce8 0%,#c1cddc 45%,#b6c3d4 62%,#c8d2df 100%);border-top:1px solid #e3e9f0;border-bottom:1px solid #9aa9bc;"></div>
<div class="a" style="left:121px;top:98px;width:29px;height:15.5px;background:linear-gradient(#d3dce8 0%,#c1cddc 45%,#b6c3d4 62%,#c8d2df 100%);border-top:1px solid #e3e9f0;border-bottom:1px solid #9aa9bc;"></div>
<div class="a" style="left:121px;top:114.5px;width:29px;height:16px;background:linear-gradient(#d2dbe7,#c3cedc);"></div>
<span class="t" style="left:123.8px;top:118.8px;font-size:8.2px;line-height:8.2px;color:#2c2e3e;transform:scaleX(0.899);">and Sin</span>
<div class="a" style="left:121px;top:131px;width:29px;height:14.5px;background:linear-gradient(#d3dce8 0%,#c1cddc 45%,#b6c3d4 62%,#c8d2df 100%);border-top:1px solid #e3e9f0;border-bottom:1px solid #9aa9bc;"></div>
<div class="a" style="left:121px;top:229.5px;width:29px;height:10px;background:linear-gradient(#f6f9fd,#e4ecf7);border-top:1px solid #c6d6ec;"></div>
<svg class="a" style="left:141.5px;top:231.5px" width="4" height="6"><path d="M0 0 L4 3 L0 6Z" fill="#5a6478"/></svg>
<div class="a" style="left:121px;top:240.5px;width:29px;height:8px;background:linear-gradient(#d3deec,#c3d1e4);"></div>
<div class="a" style="left:121px;top:248.5px;width:29px;height:11px;background:linear-gradient(#c6d9f3,#bbd4f6);"></div>
<div class="a" style="left:121px;top:259.5px;width:29px;height:17.5px;background:linear-gradient(#e1ecfc,#c9def9);"></div>
<svg class="a" style="left:122px;top:263px" width="11" height="11"><path d="M6 1.8 L1 1.8 L1 9.8 L9 9.8 L9 5.5" fill="none" stroke="#26467e" stroke-width="1.1"/><path d="M4 7 L4.6 5 L9 0.8 L10.2 2 L5.8 6.4Z" fill="#dfe9f8" stroke="#26467e" stroke-width=".9"/></svg>
<span class="t" style="left:135.7px;top:264.4px;font-size:8.2px;line-height:8.2px;color:#7d8aa2;transform:scaleX(0.870);">Edit</span>
<div class="a" style="left:138px;top:278px;width:11.5px;height:144.5px;background:linear-gradient(90deg,#edf2f9,#fafcfe 50%,#e8eef7);border-left:1px solid #c3d3ea;"></div>
<svg class="a" style="left:140.8px;top:282.2px" width="6.4" height="4"><path d="M0 3.7 L3.2 0.2 L6.4 3.7Z" fill="#4a5468"/></svg>
<svg class="a" style="left:140.8px;top:414.6px" width="6.4" height="4"><path d="M0 0.3 L3.2 3.8 L6.4 0.3Z" fill="#4a5468"/></svg>
<div class="a" style="left:139.5px;top:357px;width:9px;height:52px;background:linear-gradient(90deg,#c4ccd8,#eef1f6 45%,#cfd6e0);border:1px solid #98a5b8;border-radius:2px;"></div>
<div class="a" style="left:141.5px;top:381px;width:5px;height:1px;background:#7d8798;"></div>
<div class="a" style="left:141.5px;top:383px;width:5px;height:1px;background:#7d8798;"></div>
<div class="a" style="left:141.5px;top:385px;width:5px;height:1px;background:#7d8798;"></div>
<div class="a" style="left:611px;top:15px;width:70px;height:408px;background:#cfe2fb;"></div>
<div class="a" style="left:611px;top:16px;width:70px;height:14px;background:linear-gradient(#dfeafb,#c9ddf8);"></div>
<span class="t" style="left:611.5px;top:18.3px;font-size:9px;line-height:9px;color:#1d2440;transform:scaleX(0.850);">Control panel</span>
<div class="a" style="left:611px;top:30px;width:70px;height:1px;background:#e9f1fc;"></div>
<div class="a" style="left:611px;top:31px;width:70px;height:2.5px;background:#8fb4e8;"></div>
<div class="a" style="left:612px;top:33px;width:70px;height:90px;background:#c3d9f6;border:1px solid #8eb0de;"></div>
<div class="a" style="left:670px;top:33.5px;width:10px;height:89px;background:#f2f7fd;"></div>
<div class="a" style="left:613.5px;top:33.5px;width:56px;height:19.2px;background:linear-gradient(#a9bad4 0%,#7690bb 24%,#0b2c62 29%,#0a3470 58%,#1b62b8 80%,#3a8adc 100%);border:1px solid #2a4878;border-top-color:#c8d3e4;"></div>
<span class="t" style="left:622.7px;top:39px;font-size:9px;line-height:9px;color:#f4f7fc;transform:scaleX(0.854);">Disconnect</span>
<div class="a" style="left:613.5px;top:54.3px;width:56px;height:31.5px;background:linear-gradient(#c9cccf 0%,#b4b8bc 35%,#9fa5aa 55%,#b0b4b8 80%,#c3c6c9 100%);border:1px solid #d8dbde;border-bottom-color:#8a9096;border-radius:2px;"></div>
<span class="t" style="left:632.5px;top:65.3px;font-size:11px;line-height:11px;color:#8b9197;font-weight:bold;transform:scaleX(0.832);">Run</span>
<div class="a" style="left:672.3px;top:55px;width:8px;height:31px;background:linear-gradient(#ee7a12,#f08a1a);"></div>
<div class="a" style="left:613.5px;top:89px;width:56px;height:32px;background:linear-gradient(#c9cccf 0%,#b4b8bc 35%,#9fa5aa 55%,#b0b4b8 80%,#c3c6c9 100%);border:1px solid #d8dbde;border-bottom-color:#8a9096;border-radius:2px;"></div>
<span class="t" style="left:617.4px;top:100px;font-size:11px;line-height:11px;color:#8b9197;font-weight:bold;transform:scaleX(0.835);">Check only</span>
<div class="a" style="left:672.3px;top:89px;width:8px;height:32px;background:linear-gradient(#5a78e0 0%,#1a2cf0 40%,#0808f8 100%);"></div>
<div class="a" style="left:613px;top:125.5px;width:70px;height:220px;background:linear-gradient(#dbe9fc 0%,#cbe0fa 25%,#c5ddfa 60%,#bcd8f9 100%);border:1px solid #7fa4da;box-shadow:inset 0 1px 0 #eef4fd;"></div>
<span class="t" style="left:616.7px;top:130.4px;font-size:9px;line-height:9px;color:#1f3a72;font-weight:bold;transform:scaleX(0.823);-webkit-text-stroke:.15px #1f3a72;">Level (%):</span>
<div class="a" style="left:617.3px;top:143px;width:65px;height:17.8px;background:#020202;"></div>
<span class="t" style="left:663.8px;top:147px;font-size:13.5px;line-height:13.5px;color:#08ebff;font-weight:bold;transform:scaleX(1.026);-webkit-text-stroke:.2px #08ebff;">10</span>
<span class="t" style="left:616.7px;top:165.5px;font-size:9px;line-height:9px;color:#1f3a72;font-weight:bold;transform:scaleX(0.847);-webkit-text-stroke:.15px #1f3a72;">Ctrl RMS (g):</span>
<div class="a" style="left:617.3px;top:178.2px;width:65px;height:18.5px;background:#020202;"></div>
<span class="t" style="left:655.5px;top:182px;font-size:13.5px;line-height:13.5px;color:#08ebff;font-weight:bold;transform:scaleX(1.012);-webkit-text-stroke:.2px #08ebff;">0.10</span>
<div class="a" style="left:617.3px;top:208.8px;width:65px;height:1.2px;background:#2a4674;"></div>
<div class="a" style="left:613px;top:349px;width:70px;height:10.5px;background:linear-gradient(#e6effc,#d6e5fa);border:1px solid #a9c4ea;"></div>
<span class="t" style="left:659.5px;top:350.3px;font-size:8.6px;line-height:8.6px;color:#1c3a7c;transform:scaleX(0.984);">Collap</span>
<div class="a" style="left:613px;top:360px;width:70px;height:24px;background:linear-gradient(#d9e8fc,#bfd9f9);border:1px solid #8eb0de;"></div>
<span class="t" style="left:675px;top:364px;font-size:9px;line-height:9px;color:#16203c;font-weight:bold;">T</span>
<div class="a" style="left:613px;top:383.5px;width:70px;height:37px;background:linear-gradient(#c6defa,#aed0f8);border:1px solid #7fa6dc;"></div>
<div class="a" style="left:121px;top:423.4px;width:557px;height:17.6px;background:linear-gradient(#cde1fa 0%,#c4dcf9 30%,#bbd6f8 82%,#c9ddf6 100%);"></div>
<div class="a" style="left:121px;top:423px;width:557px;height:1px;background:#d3e4fb;"></div>
<span class="t" style="left:119.6px;top:427.8px;font-size:8.6px;line-height:8.6px;color:#18348c;font-weight:bold;transform:scaleX(0.932);-webkit-text-stroke:.2px #18348c;">fs)</span>
<span class="t" style="left:131.9px;top:427.8px;font-size:8.6px;line-height:8.6px;color:#18348c;font-weight:bold;transform:scaleX(0.856);-webkit-text-stroke:.2px #18348c;">=</span>
<span class="t" style="left:140px;top:427.8px;font-size:8.6px;line-height:8.6px;color:#18348c;font-weight:bold;transform:scaleX(0.883);-webkit-text-stroke:.2px #18348c;">5120</span>
<span class="t" style="left:159.8px;top:427.8px;font-size:8.6px;line-height:8.6px;color:#18348c;font-weight:bold;transform:scaleX(0.763);-webkit-text-stroke:.2px #18348c;">Hz;</span>
<span class="t" style="left:173.1px;top:427.8px;font-size:8.6px;line-height:8.6px;color:#18348c;font-weight:bold;transform:scaleX(0.862);-webkit-text-stroke:.2px #18348c;">Frequency</span>
<span class="t" style="left:213.6px;top:427.8px;font-size:8.6px;line-height:8.6px;color:#18348c;font-weight:bold;transform:scaleX(0.820);-webkit-text-stroke:.2px #18348c;">range</span>
<span class="t" style="left:236px;top:427.8px;font-size:8.6px;line-height:8.6px;color:#18348c;font-weight:bold;transform:scaleX(0.860);-webkit-text-stroke:.2px #18348c;">(fa)</span>
<span class="t" style="left:250.6px;top:427.8px;font-size:8.6px;line-height:8.6px;color:#18348c;font-weight:bold;transform:scaleX(0.876);-webkit-text-stroke:.2px #18348c;">=</span>
<span class="t" style="left:257.8px;top:427.8px;font-size:8.6px;line-height:8.6px;color:#18348c;font-weight:bold;transform:scaleX(0.930);-webkit-text-stroke:.2px #18348c;">2000</span>
<span class="t" style="left:278.1px;top:427.8px;font-size:8.6px;line-height:8.6px;color:#18348c;font-weight:bold;transform:scaleX(0.837);-webkit-text-stroke:.2px #18348c;">Hz</span>
<div class="a" style="left:121px;top:440.8px;width:557px;height:10px;background:#1e2124;"></div>
<div class="a" style="left:384.6px;top:446.2px;width:9.2px;height:5px;background:#12a022;border-radius:4px 4px 0 0;"></div>
<div class="a" style="left:380.5px;top:448.8px;width:1.5px;height:2px;background:#d0d4d8;"></div>
<div class="a" style="left:404.7px;top:448.6px;width:15.3px;height:2px;background:#3a78d8;"></div>
<div class="a" style="left:428.2px;top:444.2px;width:25.6px;height:6px;background:#3a3d42;border-radius:2px 2px 0 0;border-top:1px solid #3f6a62;"></div>
<div class="a" style="left:548px;top:448.8px;width:9px;height:2px;background:#cbb090;"></div>
<div class="a" style="left:557.6px;top:447px;width:8px;height:4px;background:#e8502a;border-radius:4px 4px 0 0;"></div>
<!--RIGHT-->
<!--STATUS-->
<div class="a" style="left:0;top:0;width:121px;height:450px;background:#000"></div>
<div class="a" style="left:678px;top:0;width:122px;height:450px;background:#000"></div>
</div>
<div class="a" style="left:0;top:0;width:121px;height:450px;background:#000"></div>
<div class="a" style="left:678px;top:0;width:122px;height:450px;background:#000"></div>
</body>
</html>
